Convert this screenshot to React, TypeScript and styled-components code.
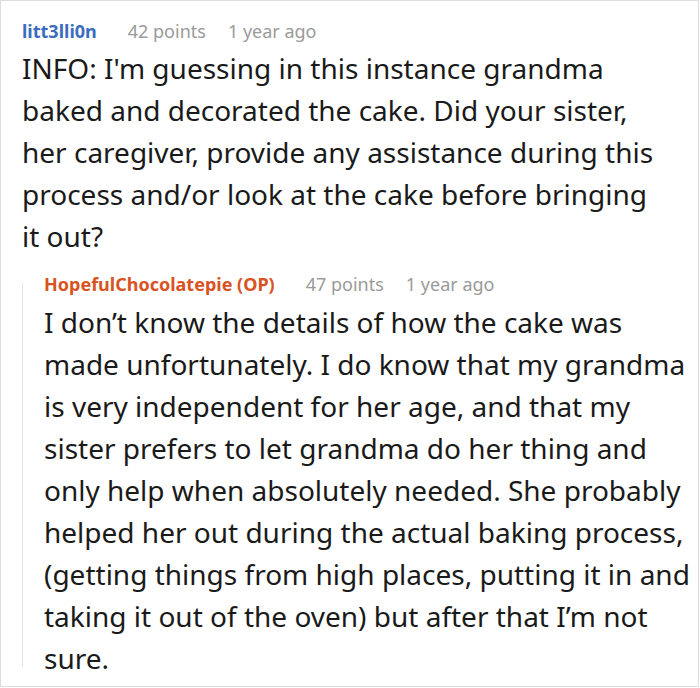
import React from "react";
import styled, { createGlobalStyle } from "styled-components";

type Comment = {
    author: string;
    op?: boolean;
    points: number;
    time: string;
    lines: string[];
}

const parent: Comment = {
    author: "litt3lli0n",
    points: 42,
    time: "1 year ago",
    lines: [
        "INFO: I'm guessing in this instance grandma",
        "baked and decorated the cake. Did your sister,",
        "her caregiver, provide any assistance during this",
        "process and/or look at the cake before bringing",
        "it out?",
    ],
}

const reply: Comment = {
    author: "HopefulChocolatepie (OP)",
    op: true,
    points: 47,
    time: "1 year ago",
    lines: [
        "I don\u2019t know the details of how the cake was",
        "made unfortunately. I do know that my grandma",
        "is very independent for her age, and that my",
        "sister prefers to let grandma do her thing and",
        "only help when absolutely needed. She probably",
        "helped her out during the actual baking process,",
        "(getting things from high places, putting it in and",
        "taking it out of the oven) but after that I\u2019m not",
        "sure.",
    ],
}

const GlobalStyle = createGlobalStyle`
    html, body {
        margin: 0;
        padding: 0;
        background: #fff;
    }
    body {
        font-family: "Noto Sans", "Open Sans", sans-serif;
    }
`;

export default function App() {
    return (
        <>
            <GlobalStyle />
            <Card>
                <CommentItem comment={parent} />
                <Reply>
                    <CommentItem comment={reply} />
                </Reply>
            </Card>
        </>
    );
}

const CommentItem: React.FC<{ comment: Comment }> = ({ comment }) => {
    return (
        <div>
            <Meta>
                <Author $op={comment.op}>{comment.author}</Author>
                <Points>{comment.points} points</Points>
                <Time>{comment.time}</Time>
            </Meta>
            <Body>
                {comment.lines.map((line, i) => (
                    <Line key={i}>{line}</Line>
                ))}
            </Body>
        </div>
    );
};

const Card = styled.div`
    box-sizing: border-box;
    width: 699px;
    height: 687px;
    border: 1px solid #dcdcdc;
    padding: 18px 0 0 21px;
    overflow: hidden;
`;

const Meta = styled.div`
    display: flex;
    align-items: baseline;
    font-size: 18px;
    line-height: 24px;
    white-space: nowrap;
`;

const Author = styled.span<{ $op?: boolean }>`
    font-weight: 700;
    color: ${props => props.$op ? "#d8531f" : "#3a6cc0"};
    margin-right: 31px;
`;

const Points = styled.span`
    color: #9a9a9a;
    margin-right: 22px;
`;

const Time = styled.span`
    color: #9a9a9a;
`;

const Body = styled.div`
    margin-top: 4px;
    font-size: 28px;
    line-height: 42px;
    color: #1a1a1a;
`;

const Line = styled.div`
    white-space: nowrap;
`;

const Reply = styled.div`
    position: relative;
    margin-top: 15px;
    padding-left: 22px;

    &::before {
        content: "";
        position: absolute;
        left: 0;
        top: 11px;
        bottom: 12px;
        width: 1px;
        background: #e2e2e2;
    }

    ${Body} {
        margin-top: 5px;
    }
`;
